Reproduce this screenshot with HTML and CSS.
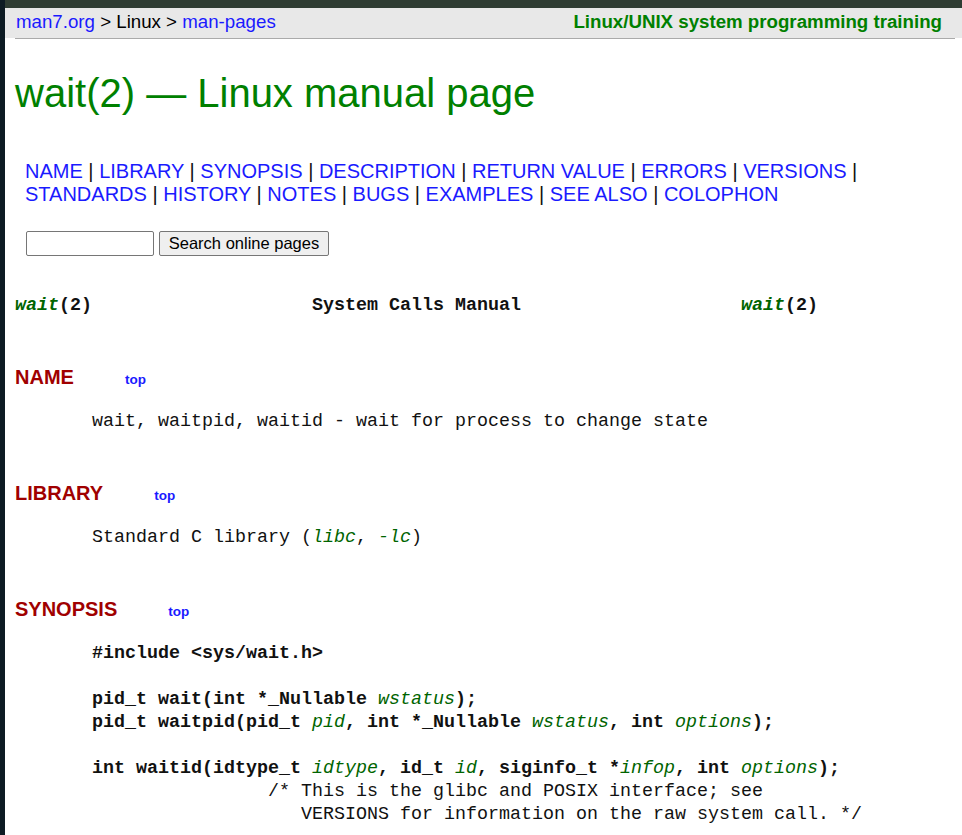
FILE: index.html
```html
<!DOCTYPE html>
<html lang="en">
<head>
<meta charset="utf-8">
<title>wait(2) - Linux manual page</title>
<link rel="stylesheet" href="styles.css">
</head>
<body>
<div class="page">
  <div class="topbar">
    <div class="crumbs"><a href="#">man7.org</a> &gt; Linux &gt; <a href="#">man-pages</a></div>
    <div><a class="training" href="#">Linux/UNIX system programming training</a></div>
  </div>
  <div class="endline"></div>

  <div class="content">
    <h1 class="title">wait(2) — Linux manual page</h1>

    <div class="sectionlinks">
      <a href="#">NAME</a> <span class="sep">|</span> <a href="#">LIBRARY</a> <span class="sep">|</span> <a href="#">SYNOPSIS</a> <span class="sep">|</span> <a href="#">DESCRIPTION</a> <span class="sep">|</span> <a href="#">RETURN VALUE</a> <span class="sep">|</span> <a href="#">ERRORS</a> <span class="sep">|</span> <a href="#">VERSIONS</a> <span class="sep">|</span> <a href="#">STANDARDS</a> <span class="sep">|</span> <a href="#">HISTORY</a> <span class="sep">|</span> <a href="#">NOTES</a> <span class="sep">|</span> <a href="#">BUGS</a> <span class="sep">|</span> <a href="#">EXAMPLES</a> <span class="sep">|</span> <a href="#">SEE ALSO</a> <span class="sep">|</span> <a href="#">COLOPHON</a>
    </div>

    <form class="search">
      <input type="text" class="search-box">
      <button type="button" class="search-btn">Search online pages</button>
    </form>

<pre class="headline"><i>wait</i>(2)                    System Calls Manual                    <i>wait</i>(2)</pre>

    <section class="sec">
      <h2>NAME<a class="toplink" href="#">top</a></h2>
<pre>       wait, waitpid, waitid - wait for process to change state</pre>
    </section>

    <section class="sec">
      <h2>LIBRARY<a class="toplink" href="#">top</a></h2>
<pre>       Standard C library (<i>libc</i>, <i>-lc</i>)</pre>
    </section>

    <section class="sec">
      <h2>SYNOPSIS<a class="toplink" href="#">top</a></h2>
<pre>       <b>#include &lt;sys/wait.h&gt;</b>

       <b>pid_t wait(int *_Nullable </b><i>wstatus</i><b>);</b>
       <b>pid_t waitpid(pid_t </b><i>pid</i><b>, int *_Nullable </b><i>wstatus</i><b>, int </b><i>options</i><b>);</b>

       <b>int waitid(idtype_t </b><i>idtype</i><b>, id_t </b><i>id</i><b>, siginfo_t *</b><i>infop</i><b>, int </b><i>options</i><b>);</b>
                       /* This is the glibc and POSIX interface; see
                          VERSIONS for information on the raw system call. */</pre>
    </section>
  </div>
</div>
</body>
</html>
```

FILE: styles.css
```css
html, body {
  margin: 0;
  padding: 0;
  background: #ffffff;
}

body {
  border-left: 5px solid #0d1b23;
  min-height: 835px;
  box-sizing: border-box;
  font-family: "Liberation Sans", Arial, sans-serif;
  color: #000;
  overflow: hidden;
}

.page {
  border-top: 8px solid #2f3d33;
}

.topbar {
  height: 30px;
  box-sizing: border-box;
  padding: 3px 20px 0 11px;
  background: #e8e8e8;
  display: flex;
  justify-content: space-between;
  font-size: 18.7px;
  line-height: 22px;
}

.topbar a {
  color: #1a1aff;
  text-decoration: none;
}

.topbar a.training {
  color: #008000;
  font-weight: bold;
}

.endline {
  height: 1px;
  background: #aaaaaa;
  margin: 0 7px 0 10px;
}

.content {
  padding-left: 10px;
}

.title {
  margin: 31px 0 0;
  font-size: 40px;
  line-height: 46px;
  font-weight: normal;
  color: #008000;
}

.sectionlinks {
  margin: 44px 0 0;
  padding-left: 10px;
  font-size: 20px;
  line-height: 23px;
}

.sectionlinks a {
  color: #1a1aff;
  text-decoration: none;
}

.sep {
  color: #111;
}

.search {
  margin: 25px 0 0 11px;
  display: flex;
  gap: 5px;
}

.search-box {
  width: 128px;
  height: 25px;
  box-sizing: border-box;
  border: 1px solid #767676;
  border-radius: 2px;
  margin: 0;
  padding: 1px 2px;
  background: #fff;
}

.search-btn {
  width: 170px;
  height: 25px;
  box-sizing: border-box;
  border: 1px solid #767676;
  border-radius: 2px;
  background: #efefef;
  margin: 0;
  padding: 0;
  font-family: "Liberation Sans", Arial, sans-serif;
  font-size: 16.5px;
  color: #000;
}

pre {
  font-family: "Liberation Mono", "DejaVu Sans Mono", monospace;
  font-size: 18.33px;
  line-height: 23px;
  margin: 0;
  color: #111;
}

pre i {
  color: #006400;
}

pre b {
  font-weight: bold;
}

.headline {
  margin: 38px 0 49px;
  font-weight: bold;
}

.sec h2 {
  margin: 0 0 21px;
  font-size: 20px;
  line-height: 23px;
  font-weight: bold;
  color: #a00000;
}

.toplink {
  font-size: 13.5px;
  line-height: 1;
  color: #1a1aff;
  text-decoration: none;
  margin-left: 51px;
}

.sec pre {
  margin-bottom: 49px;
}
```
